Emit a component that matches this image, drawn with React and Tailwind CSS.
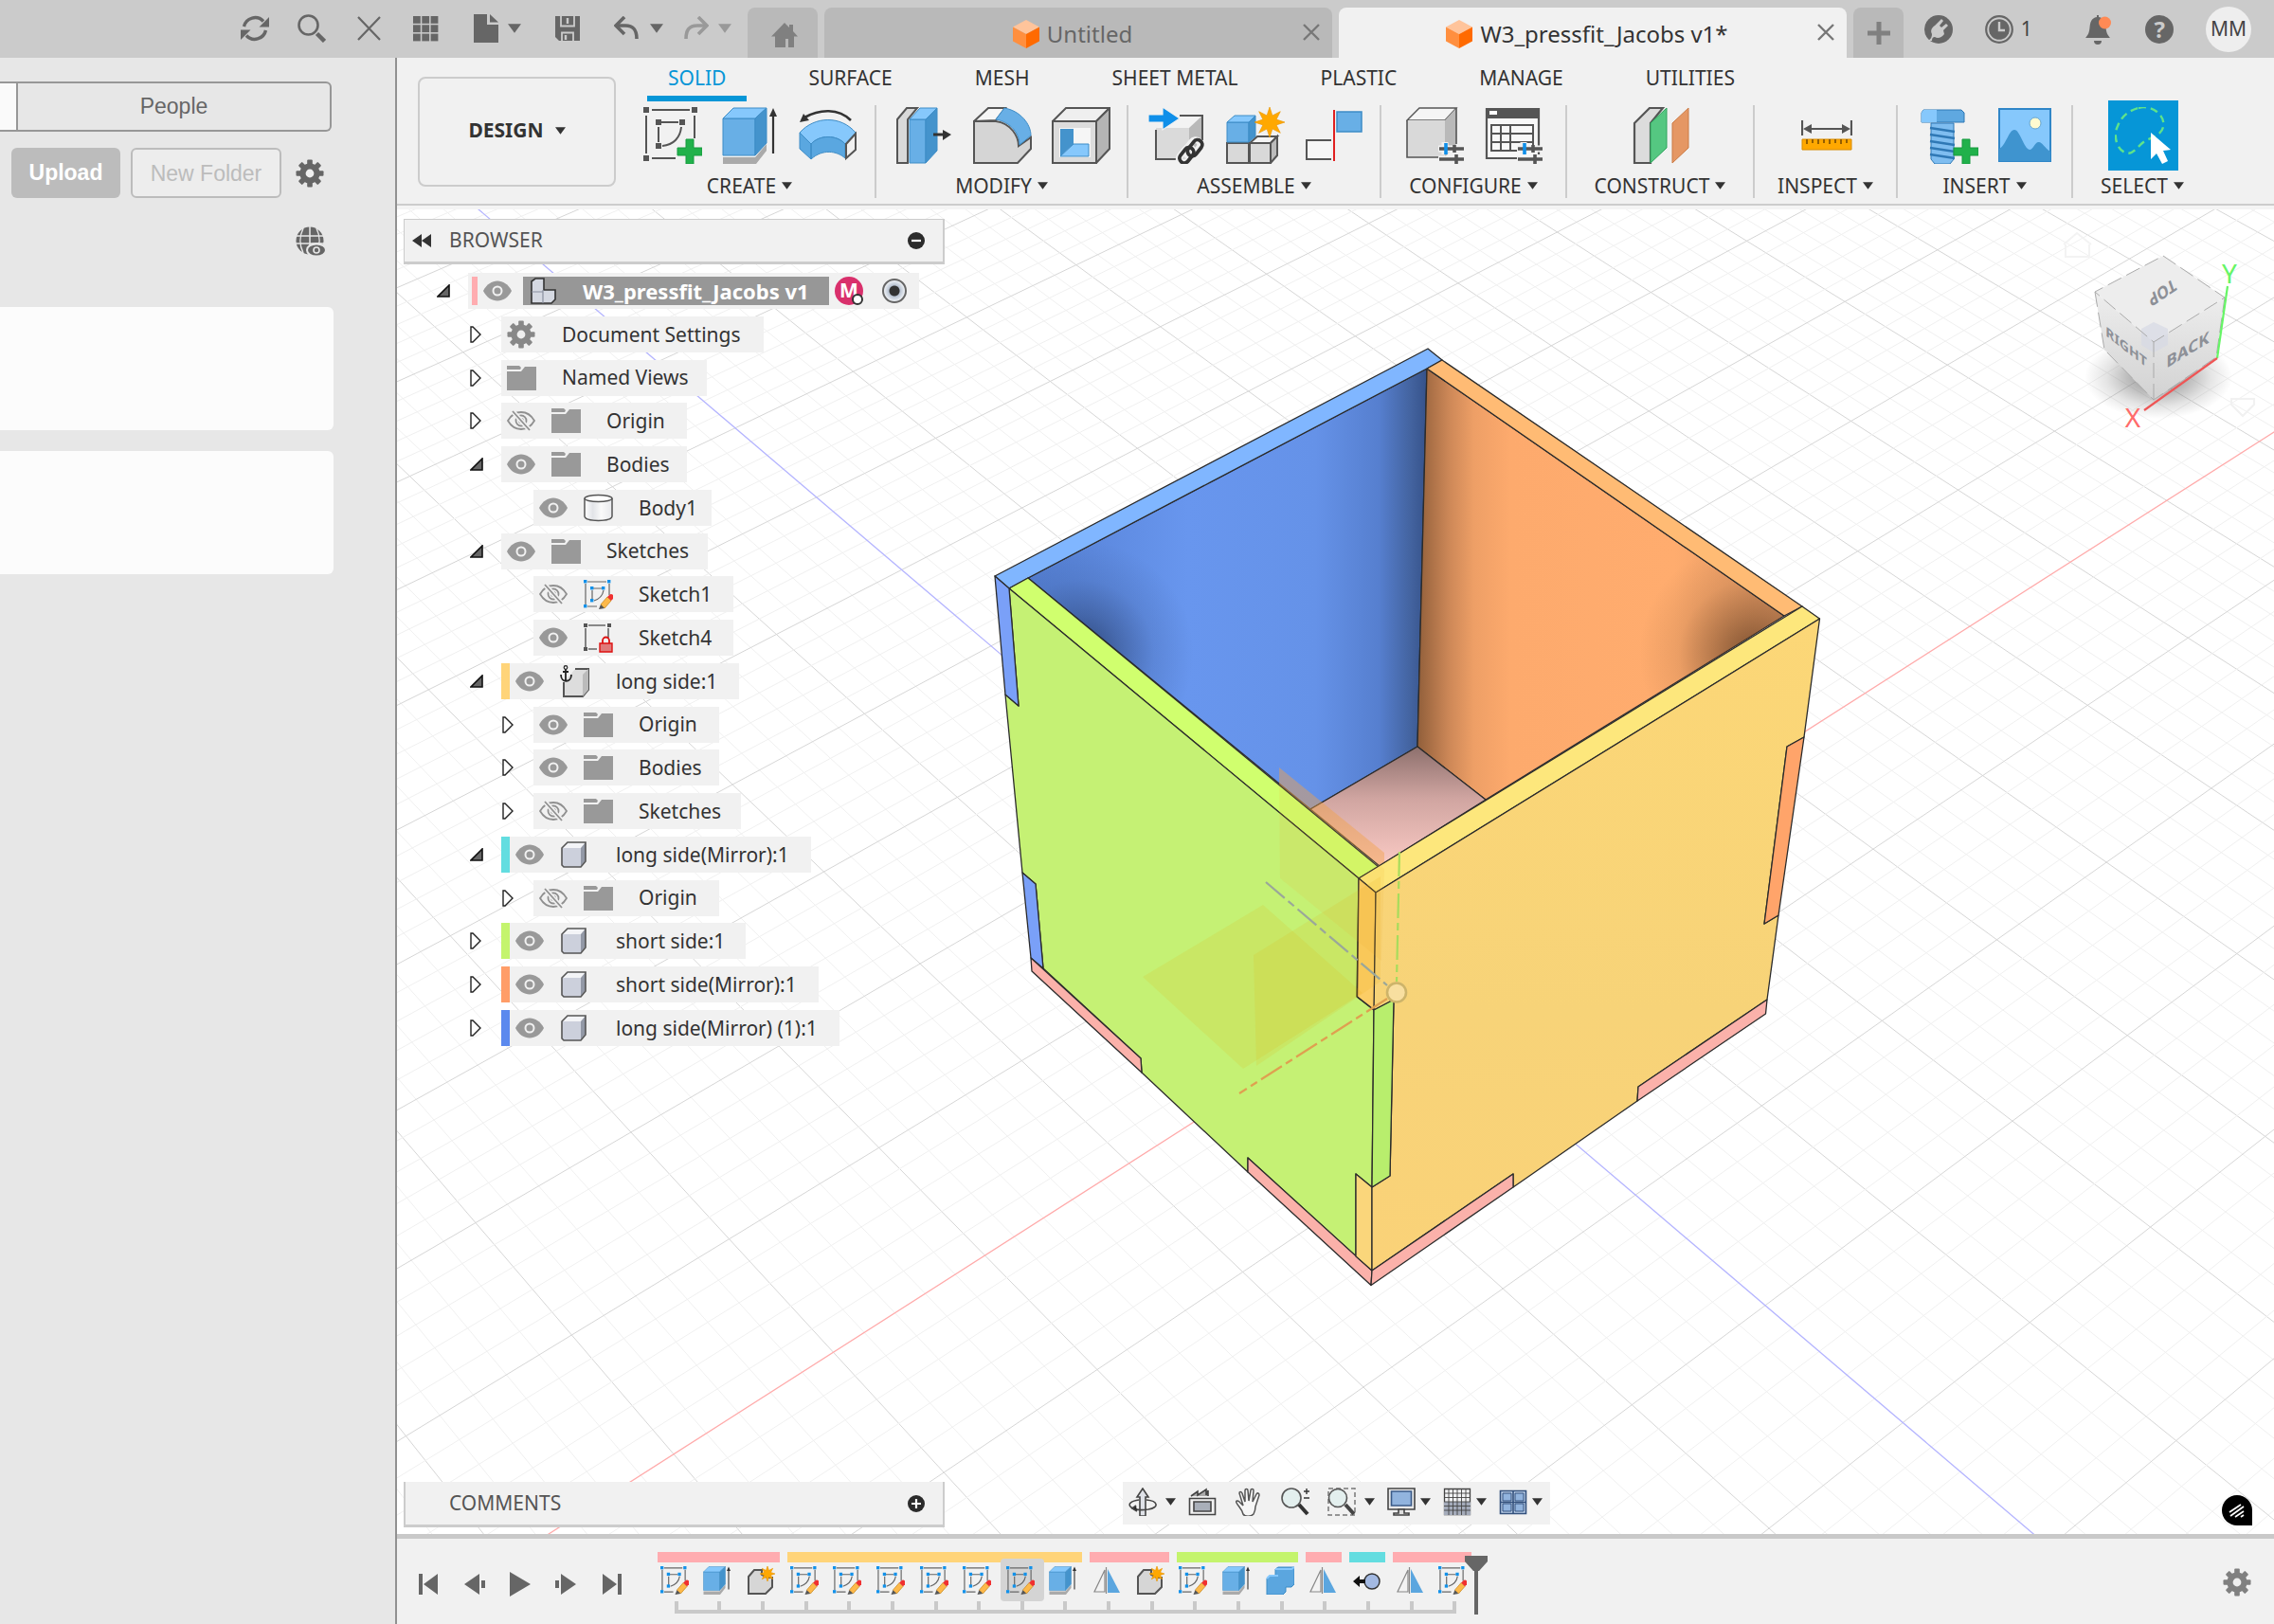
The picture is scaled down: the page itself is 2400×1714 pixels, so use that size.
import React from "react";
import clsx from "clsx";

/* ---------- small shared bits ---------- */

function Svg({ box = "0 0 60 60", className = "size-[60px]", children }) {
  return (
    <svg viewBox={box} className={clsx("shrink-0", className)} fill="none" aria-hidden="true">
      {children}
    </svg>
  );
}

function Caret({ className = "w-[11px] h-2" }) {
  return (
    <svg viewBox="0 0 12 8" className={clsx("shrink-0", className)} aria-hidden="true">
      <path d="M0 0h12L6 8z" fill="currentColor" />
    </svg>
  );
}

function Gear({ className = "size-[30px]" }) {
  return (
    <Svg box="0 0 30 30" className={className}>
      {[0, 45, 90, 135].map((a) => (
        <rect key={a} x="12.2" y="0.5" width="5.6" height="29" rx="1" fill="currentColor" transform={`rotate(${a} 15 15)`} />
      ))}
      <circle cx="15" cy="15" r="7.6" stroke="currentColor" strokeWidth="6" />
      <circle cx="15" cy="15" r="4.4" fill="#efefef" />
    </Svg>
  );
}

function OrangeCube() {
  return (
    <Svg box="0 0 28 30" className="w-7 h-[30px]">
      <path d="M14 0l14 7.5L14 15 0 7.5z" fill="#ffc49b" />
      <path d="M0 7.5L14 15v15L0 22.5z" fill="#ff8f3f" />
      <path d="M28 7.5L14 15v15l14-7.5z" fill="#ff6a00" />
    </Svg>
  );
}

/* ---------- application bar ---------- */

function IconButton({ label, className, children }) {
  return (
    <button type="button" aria-label={label} className={clsx("flex items-center shrink-0", className)}>
      {children}
    </button>
  );
}

function Tab({ label, active }) {
  return (
    <div
      className={clsx(
        "flex flex-1 items-center h-[53px] rounded-t-lg pl-5 pr-3 pt-0.5 min-w-0",
        active ? "bg-[#f1f1f1] text-[#333]" : "bg-[#b9b9b9] text-[#666]"
      )}
    >
      <button type="button" className="flex flex-1 items-center justify-center gap-2 text-2xl whitespace-nowrap">
        <OrangeCube />
        {label}
      </button>
      <IconButton label={`Close ${label}`} className="pb-1">
        <Svg box="0 0 20 20" className="size-5">
          <path d="M2 2l16 16M18 2L2 18" stroke="#777" strokeWidth="2.4" />
        </Svg>
      </IconButton>
    </div>
  );
}

function AppBar() {
  return (
    <header className="flex h-[61px] bg-[#cbcbcb] text-[#666]">
      <div className="flex items-center w-[789px] shrink-0 pl-[254px] pb-px">
        <div className="flex gap-[30px]">
          <IconButton label="Refresh">
            <Svg box="0 0 30 30" className="size-[30px]">
              <path d="M3.5 13A12 12 0 0 1 24 7.5M26.5 17A12 12 0 0 1 6 22.5" stroke="currentColor" strokeWidth="3.4" />
              <path d="M30 3v10.5H19.5zM0 27V16.5h10.5z" fill="currentColor" />
            </Svg>
          </IconButton>
          <IconButton label="Search">
            <Svg box="0 0 30 30" className="size-[30px]">
              <circle cx="11.5" cy="11.5" r="10" stroke="currentColor" strokeWidth="2.6" />
              <path d="M20.5 20.5l8 8" stroke="currentColor" strokeWidth="4.5" />
            </Svg>
          </IconButton>
          <IconButton label="Close panel">
            <Svg box="0 0 30 30" className="size-[30px]">
              <path d="M4 3l23 24M27 3L4 27" stroke="currentColor" strokeWidth="2.2" />
            </Svg>
          </IconButton>
          <IconButton label="Data panel">
            <Svg box="0 0 30 30" className="size-[30px]">
              {[0, 1, 2].map((r) =>
                [0, 1, 2].map((c) => (
                  <rect key={`${r}${c}`} x={2 + c * 9.3} y={2 + r * 9.3} width="7.8" height="7.8" fill="currentColor" />
                ))
              )}
            </Svg>
          </IconButton>
        </div>
        <div className="flex gap-[34px] ml-[34px]">
          <IconButton label="File" className="gap-2">
            <Svg box="0 0 30 32" className="w-[30px] h-8">
              <path d="M2 1h14v11h12v19H2z" fill="currentColor" />
              <path d="M19 1l9 8.5h-9z" fill="currentColor" />
            </Svg>
            <Caret className="w-3.5 h-2.5" />
          </IconButton>
          <IconButton label="Save">
            <Svg box="0 0 30 30" className="size-[30px]">
              <path d="M2 2h26v26H6l-4-4z" fill="currentColor" />
              <path d="M8 2v10.5h14V2M9 28v-8.5h12V28" stroke="#cbcbcb" strokeWidth="1.8" />
              <path d="M15 4v6M13 22v5" stroke="#cbcbcb" strokeWidth="2.4" />
            </Svg>
          </IconButton>
        </div>
        <div className="flex gap-5 ml-[34px]">
          <IconButton label="Undo" className="gap-2.5">
            <Svg box="0 0 28 26" className="w-7 h-[26px]">
              <path d="M2 10h10c9 0 12 5 12 14" stroke="currentColor" strokeWidth="3.6" />
              <path d="M11 1L2 10l9 9" stroke="currentColor" strokeWidth="3.6" />
            </Svg>
            <Caret className="w-3.5 h-2.5" />
          </IconButton>
          <IconButton label="Redo" className="gap-2.5 text-[#999]">
            <Svg box="0 0 28 26" className="w-7 h-[26px]">
              <path d="M26 10H16C7 10 4 15 4 24" stroke="currentColor" strokeWidth="3.6" />
              <path d="M17 1l9 9-9 9" stroke="currentColor" strokeWidth="3.6" />
            </Svg>
            <Caret className="w-3.5 h-2.5" />
          </IconButton>
        </div>
      </div>

      <div className="flex flex-1 items-end gap-[7px] min-w-0">
        <button type="button" aria-label="Home" className="flex items-center justify-center w-[74px] h-[53px] pl-1 pt-1 rounded-t-lg bg-[#b9b9b9] text-[#808080]">
          <Svg box="0 0 30 28" className="w-[30px] h-7">
            <path d="M15 1l5 5V3h4v7l5 5.5h-4V27h-6v-9h-3v9H5V15.500H1z" fill="currentColor" />
          </Svg>
        </button>
        <Tab label="Untitled" />
        <Tab label="W3_pressfit_Jacobs v1*" active />
        <button type="button" aria-label="New design" className="flex items-center justify-center w-[53px] h-[53px] rounded-t-lg bg-[#b9b9b9]">
          <Svg box="0 0 24 24" className="size-6">
            <path d="M12 0v24M0 12h24" stroke="#808080" strokeWidth="5" />
          </Svg>
        </button>
      </div>

      <div className="flex items-center w-[391px] shrink-0 pl-[22px] pr-6 justify-between">
        <IconButton label="Extensions">
          <Svg box="0 0 30 30" className="size-[30px]">
            <circle cx="15" cy="15" r="15" fill="currentColor" />
            <path d="M4 27c3-2 4-4 4-7-2-4 0-7 3-9l7-7 2 2-4 5 2 2 5-4 2 2-5 5 1 4c-3 4-7 5-10 3-2 0-3 1-3 4z" fill="#cbcbcb" />
          </Svg>
        </IconButton>
        <IconButton label="Jobs" className="gap-2 text-[21px]">
          <Svg box="0 0 30 30" className="size-[30px]">
            <circle cx="15" cy="15" r="13.8" stroke="currentColor" strokeWidth="2.2" />
            <circle cx="15" cy="15" r="10.8" fill="currentColor" />
            <path d="M15 7v9h6" stroke="#cbcbcb" strokeWidth="2.4" />
          </Svg>
          <span className="text-[#444]">1</span>
        </IconButton>
        <IconButton label="Notifications" className="ml-[22px]">
          <Svg box="0 0 30 32" className="w-[30px] h-8">
            <path d="M13 1h2v2c6 1 7 6 7.5 11 .5 6 2 8 4.5 11H1c2.500-3 4-5 4.5-11C6 9 7 4 13 3zM10 28h8a4 4 0 0 1-8 0z" fill="currentColor" />
            <circle cx="21.500" cy="9" r="6.5" fill="#ff8a55" />
          </Svg>
        </IconButton>
        <button type="button" aria-label="Help" className="flex items-center justify-center size-[30px] rounded-full bg-[#666] text-[#cbcbcb] text-2xl font-bold">
          ?
        </button>
        <button type="button" className="flex items-center justify-center size-12 rounded-full bg-[#eee] text-[#444] text-[21px]">MM</button>
      </div>
    </header>
  );
}

/* ---------- data panel ---------- */

function DataPanel() {
  return (
    <aside className="flex flex-col w-[419px] shrink-0 bg-[#e7e7e7] border-r-2 border-[#919191] font-['Liberation_Sans',Arial,sans-serif] text-[23px] text-[#666]">
      <div className="flex mt-[25px] mr-[67px] h-[53px] border-2 border-l-0 border-[#979797] rounded-r-md overflow-hidden">
        <span className="w-[19px] bg-[#fafafa] border-r-2 border-[#979797]" />
        <button type="button" className="flex-1">People</button>
      </div>
      <div className="flex items-center mt-[17px] pl-3">
        <button type="button" className="w-[115px] h-[53px] rounded-md bg-[#bcbcbc] text-white font-bold">Upload</button>
        <button type="button" className="w-[159px] h-[53px] ml-[11px] pt-0.5 rounded-md border-2 border-[#bcbcbc] bg-[#ededed] text-[#bcbcbc]">New Folder</button>
        <IconButton label="Panel settings" className="ml-[15px]">
          <Gear />
        </IconButton>
      </div>
      <IconButton label="Open on the web" className="ml-[312px] mt-[30px] w-8">
        <Svg box="0 0 32 32" className="size-8">
          <circle cx="15" cy="15" r="14.5" fill="#666" />
          <path d="M15 0v30M1 10h28M0 18h30M8 2c-4 8-4 18 0 26M22 2c4 8 4 18 0 26" stroke="#e7e7e7" strokeWidth="1.5" />
          <ellipse cx="22" cy="25" rx="11" ry="8" fill="#e7e7e7" />
          <ellipse cx="22" cy="25" rx="9" ry="5.5" fill="#666" />
          <circle cx="22" cy="25" r="3" fill="#666" stroke="#e7e7e7" strokeWidth="1.6" />
        </Svg>
      </IconButton>
      <div className="mt-[53px] mr-[65px] h-[130px] rounded-r-md bg-[#fcfcfc]" />
      <div className="mt-[22px] mr-[65px] h-[130px] rounded-r-md bg-[#fcfcfc]" />
    </aside>
  );
}

/* ---------- ribbon icons ---------- */

const dark = "#555";

function PlusMark() {
  return <path d="M45 34h8v9h9v8h-9v9h-8v-9h-9v-8h9z" fill="#21b14b" stroke="#179a3e" />;
}

function SketchIcon() {
  return (
    <Svg box="0 0 62 60" className="w-[62px] h-[60px]">
      <path d="M9 3h40M3 9v40M54 9v24M9 54h25M19 16h18M16 21v16M40 21c-1 11-8 19-20 20" stroke={dark} strokeWidth="2" />
      {[[0, 0], [51, 0], [0, 51], [13, 13], [38, 13], [13, 38]].map(([x, y]) => (
        <rect key={`${x}-${y}`} x={x} y={y} width="6" height="6" fill={dark} />
      ))}
      <PlusMark />
    </Svg>
  );
}

function ExtrudeIcon({ className = "size-[60px]" }) {
  return (
    <Svg className={className}>
      <path d="M1 53h34l12-14v7L36 60H1z" fill="#aaa" />
      <path d="M1 12h34v39H1z" fill="#68afe6" stroke="#3d8cc6" />
      <path d="M1 12L12 1h35L35 12z" fill="#86c8fc" stroke="#3d8cc6" />
      <path d="M35 12L47 1v37L35 51z" fill="#4493cc" stroke="#3d8cc6" />
      <path d="M54 49V8" stroke="#333" strokeWidth="2.2" />
      <path d="M54 1l4 9h-8z" fill="#333" />
    </Svg>
  );
}

function RevolveIcon() {
  return (
    <Svg box="0 0 62 60" className="w-[62px] h-[60px]">
      <path d="M55 14C42 1 22 2 6 11" stroke="#333" strokeWidth="2.6" />
      <path d="M1 16l4-9 6 7z" fill="#333" />
      <path d="M1 27c16-18 44-18 59 0l-11 12c-9-10-27-10-36 0z" fill="#86c8fc" stroke="#3d8cc6" />
      <path d="M1 27l12 12v16L1 44zM13 39c9-10 27-10 36 0v15c-9-8-24-10-36 1z" fill="#5aa7e0" stroke="#3d8cc6" />
      <path d="M50 39l10-11v17l-10 9z" fill="#f1f1f1" stroke={dark} strokeWidth="2" />
    </Svg>
  );
}

function PressPullIcon() {
  return (
    <Svg box="0 0 62 60" className="w-[62px] h-[60px]">
      <path d="M3 13L13 1h11L14 13v46H3z" fill="#d9d9d9" stroke={dark} strokeWidth="2" />
      <path d="M16 13h17v46H16z" fill="#68afe6" stroke="#3d8cc6" />
      <path d="M16 13L27 1h18L33 13z" fill="#86c8fc" stroke="#3d8cc6" />
      <path d="M33 13L45 1v45L33 59z" fill="#4493cc" stroke="#3d8cc6" />
      <path d="M41 29h12" stroke="#333" strokeWidth="3" />
      <path d="M51 24l9 5-9 6z" fill="#333" />
    </Svg>
  );
}

function FilletIcon() {
  return (
    <Svg box="0 0 62 60" className="w-[62px] h-[60px]">
      <path d="M1 15L16 1h18L24 14z" fill="#f6f6f6" stroke={dark} strokeWidth="2" />
      <path d="M1 15h23c16 2 24 16 24 26l13-9v12L47 59H1z" fill="#d5d5d5" stroke={dark} strokeWidth="2" />
      <path d="M33 1c17 3 28 17 28 29L49 40C49 28 40 16 24 13z" fill="#68afe6" stroke="#3d8cc6" />
    </Svg>
  );
}

function ShellIcon() {
  return (
    <Svg box="0 0 62 60" className="w-[62px] h-[60px]">
      <path d="M1 15L15 1h46L47 15z" fill="#efefef" stroke={dark} strokeWidth="2" />
      <path d="M47 15L61 1v43L47 59z" fill="#b5b5b5" stroke={dark} strokeWidth="2" />
      <path d="M1 15h46v44H1z" fill="#dcdcdc" stroke={dark} strokeWidth="2" />
      <path d="M8 22h33v31H8z" fill="#f6f6f6" />
      <path d="M9 23h14v16L9 52z" fill="#4493cc" />
      <path d="M9 52l14-13h16v13z" fill="#86c8fc" stroke="#3d8cc6" />
    </Svg>
  );
}

function InsertLinkIcon() {
  return (
    <Svg box="0 0 62 60" className="w-[62px] h-[60px]">
      <path d="M9 22L24 9h34L44 22z" fill="#f3f3f3" />
      <path d="M44 22L58 9v30L44 54z" fill="#b9b9b9" />
      <path d="M9 22v33h35V22z" fill="#dadada" />
      <path d="M9 24v31h24M34 9h24v26" stroke={dark} strokeWidth="2" />
      <path d="M1 8h15V0l18 12-18 12v-8H1z" fill="#0f8fe9" stroke="#f1f1f1" strokeWidth="1.2" />
      <g stroke="#f1f1f1" strokeWidth="7">
        <rect x="44" y="34" width="10" height="19" rx="5" transform="rotate(38 49 42)" />
        <rect x="37" y="42" width="10" height="19" rx="5" transform="rotate(38 42 50)" />
      </g>
      <g stroke="#333" strokeWidth="3.8">
        <rect x="46" y="34" width="10" height="19" rx="5" transform="rotate(38 51 42)" />
        <rect x="37" y="42" width="10" height="18" rx="5" transform="rotate(38 42 50)" />
      </g>
    </Svg>
  );
}

function Spark({ cx, cy, r }) {
  const pts = Array.from({ length: 16 }, (_, i) => {
    const a = (i * Math.PI) / 8;
    const k = i % 2 ? r * 0.48 : r;
    return `${(cx + k * Math.sin(a)).toFixed(1)},${(cy - k * Math.cos(a)).toFixed(1)}`;
  }).join(" ");
  return <polygon points={pts} fill="#ffa800" stroke="#e89400" strokeWidth="0.6" />;
}

function NewComponentIcon() {
  return (
    <Svg box="0 0 62 60" className="w-[62px] h-[60px]">
      <path d="M1 38h23v21H1zM25 38h22v21H25z" fill="#d9d9d9" stroke={dark} strokeWidth="2" />
      <path d="M25 38l8-7h21l-7 7z" fill="#f4f4f4" stroke={dark} strokeWidth="2" />
      <path d="M47 38l7-7v20l-7 8z" fill="#bbb" stroke={dark} strokeWidth="2" />
      <path d="M1 16h23v21H1z" fill="#68afe6" stroke="#3d8cc6" />
      <path d="M1 16l8-7h22l-7 7z" fill="#86c8fc" stroke="#3d8cc6" />
      <path d="M24 16l7-7v22l-7 6z" fill="#4493cc" stroke="#3d8cc6" />
      <Spark cx={46} cy={16} r={16} />
    </Svg>
  );
}

function JointIcon() {
  return (
    <Svg box="0 0 62 60" className="w-[62px] h-[60px]">
      <path d="M28 35H2v20h26" fill="#f6f6f6" stroke={dark} strokeWidth="2" />
      <path d="M34 5h26v21H34z" fill="#68afe6" stroke="#3d8cc6" strokeWidth="1.5" />
      <path d="M31 3v54" stroke="#e02020" strokeWidth="2" />
    </Svg>
  );
}

function Sliders() {
  return (
    <g>
      <path d="M34 44h28M34 55h28M41 37v13M55 50v10" stroke="#f1f1f1" strokeWidth="7" />
      <path d="M35 44h26M35 55h26M53 50v10M51 40v8" stroke={dark} strokeWidth="3.6" />
      <path d="M42 38v12" stroke="#0f8fe9" strokeWidth="3.6" />
    </g>
  );
}

function ConfigureIcon() {
  return (
    <Svg box="0 0 62 60" className="w-[62px] h-[60px]">
      <path d="M1 14L14 1h39L41 14z" fill="#f5f5f5" stroke={dark} strokeWidth="1.4" />
      <path d="M41 14L53 1v38L41 53z" fill="#b9b9b9" />
      <path d="M1 14h40v39H1z" fill="#d9d9d9" />
      <path d="M41 53H1V14M53 1v38" stroke={dark} strokeWidth="1.6" />
      <Sliders />
    </Svg>
  );
}

function TableIcon() {
  return (
    <Svg box="0 0 62 60" className="w-[62px] h-[60px]">
      <path d="M2 2h55v52H2z" fill="#f8f8f8" stroke={dark} strokeWidth="2.2" />
      <path d="M1 1h57v11H1z" fill={dark} />
      <path d="M5 4h8v4H5z" fill="#fff" />
      <path d="M7 19h44v27H7zM7 28h44M7 37h44M17 19v27M27 19v27" stroke={dark} strokeWidth="2" />
      <Sliders />
    </Svg>
  );
}

function ConstructIcon() {
  return (
    <Svg>
      <path d="M2 17L18 1h14L19 17v42H2z" fill="#dcdcdc" stroke={dark} strokeWidth="2.2" />
      <path d="M19 17L36 1v42L19 59z" fill="#55c781" stroke="#2ea45c" />
      <path d="M42 17L59 1v42L42 59z" fill="#e59764" stroke="#cb7a44" />
    </Svg>
  );
}

function MeasureIcon() {
  return (
    <Svg box="0 0 54 60" className="w-[54px] h-[60px]">
      <path d="M1 14v16M53 14v16M6 23h42" stroke={dark} strokeWidth="2.2" />
      <path d="M2 23l9-5v10zM52 23l-9-5v10z" fill={dark} />
      <path d="M1 34h52v11H1z" fill="#ffa800" stroke="#d98c00" />
      <path d="M6 34v5M12 34v4M18 34v5M24 34v4M30 34v5M36 34v4M42 34v5M48 34v4" stroke="#7a4c00" strokeWidth="1.6" />
    </Svg>
  );
}

function FastenerIcon() {
  return (
    <Svg box="0 0 62 60" className="w-[62px] h-[60px]">
      <path d="M4 3h40l3 3v10H2V6z" fill="#5fa8e0" stroke="#2f78b5" />
      <path d="M4 3h14v13H2V6z" fill="#86c8fc" />
      <path d="M12 17h24v38l-4 5H16l-4-5z" fill="#7fbdf0" stroke="#2f78b5" />
      <path d="M11 22l26 4M11 29l26 4M11 36l26 4M11 43l26 4M11 50l26 4" stroke="#2f78b5" strokeWidth="2.4" />
      <PlusMark />
    </Svg>
  );
}

function ImageIcon() {
  return (
    <Svg box="0 0 56 60" className="w-14 h-[60px]">
      <path d="M1 2h54v55H1z" fill="#86c8fc" stroke="#2f86c8" strokeWidth="2" />
      <circle cx="39" cy="17" r="6" fill="#fffbd0" stroke="#6aa7cf" />
      <path d="M1 44c7-3 10-20 16-20s10 20 16 21c4 0 6-9 10-8 3 0 6 6 12 10v10H1z" fill="#3f94cf" />
    </Svg>
  );
}

function SelectIcon() {
  return (
    <span className="flex items-center justify-center size-[74px] -my-[7px] bg-[#0696d7]">
      <Svg>
        <path
          d="M25 1C38-3 54 8 51 21 49 31 36 32 29 38 22 44 18 51 11 48 2 45-2 30 3 20 7 10 14 4 25 1z"
          stroke="#5fe38a"
          strokeWidth="2.4"
          strokeDasharray="8 5"
        />
        <path d="M38 27v28l6-6 6 11 6-3-5-11 8-1z" fill="#fff" />
      </Svg>
    </span>
  );
}

const groups = [
  { label: "CREATE", width: "w-[266px]", icons: [SketchIcon, ExtrudeIcon, RevolveIcon] },
  { label: "MODIFY", width: "w-[266px]", icons: [PressPullIcon, FilletIcon, ShellIcon] },
  { label: "ASSEMBLE", width: "w-[267px]", icons: [InsertLinkIcon, NewComponentIcon, JointIcon] },
  { label: "CONFIGURE", width: "w-[196px]", icons: [ConfigureIcon, TableIcon] },
  { label: "CONSTRUCT", width: "w-[198px]", icons: [ConstructIcon] },
  { label: "INSPECT", width: "w-[151px]", icons: [MeasureIcon] },
  { label: "INSERT", width: "w-[185px]", icons: [FastenerIcon, ImageIcon] },
  { label: "SELECT", width: "w-[146px]", icons: [SelectIcon] },
];

const workspaces = ["SOLID", "SURFACE", "MESH", "SHEET METAL", "PLASTIC", "MANAGE", "UTILITIES"];

function Ribbon() {
  return (
    <div className="flex h-[156px] bg-[#f1f1f1] border-b-2 border-[#ccc] text-[#333] text-[21px]">
      <button
        type="button"
        className="flex items-center justify-center gap-3 w-[209px] h-[116px] mt-5 ml-[22px] pb-0.5 shrink-0 rounded-lg border-2 border-[#ccc] font-bold"
      >
        DESIGN <Caret />
      </button>
      <div className="flex flex-col flex-1 min-w-0">
        <nav className="flex gap-[43px] pl-[33px] h-[46px]">
          {workspaces.map((w, i) => (
            <a
              key={w}
              href={`#${w.toLowerCase().replace(" ", "-")}`}
              className={clsx(
                "px-[22px] pt-[5px] leading-[33px] border-b-[6px] whitespace-nowrap",
                i === 0 ? "text-[#0696d7] border-[#0696d7]" : "border-transparent"
              )}
            >
              {w}
            </a>
          ))}
        </nav>
        <div className="flex pl-[9px] pt-1">
          {groups.map(({ label, width, icons }, i) => (
            <div
              key={label}
              className={clsx(
                "flex flex-col items-center h-[98px] shrink-0 border-[#ccc]",
                width,
                i < groups.length - 1 && "border-r-2"
              )}
            >
              <div className="flex gap-[21px] h-[60px] mt-0.5 pl-0.5">
                {icons.map((Icon, k) => (
                  <button key={k} type="button" aria-label={`${label} ${k + 1}`}>
                    <Icon />
                  </button>
                ))}
              </div>
              <button type="button" className="flex items-center gap-1.5 mt-[9px] leading-7">
                {label} <Caret />
              </button>
            </div>
          ))}
        </div>
      </div>
    </div>
  );
}

/* ---------- viewport drawing ---------- */

// Perspective map of the ground plane, one unit = one major grid cell.
function project(u, w) {
  const d = 1 + 0.0233 * u - 0.02723 * w;
  return [(1474.7 + 169.3 * u + 78.7 * w) / d, (1047 - 61.79 * u + 72.74 * w) / d];
}

function GridLine({ from, to, stroke, width = 1 }) {
  const [x1, y1] = project(...from);
  const [x2, y2] = project(...to);
  return <line x1={x1} y1={y1} x2={x2} y2={y2} stroke={stroke} strokeWidth={width} />;
}

function Grid() {
  const lines = [];
  for (let i = -40; i <= 65; i++) {
    if (i === 0) continue;
    lines.push(<GridLine key={`u${i}`} from={[i / 5, -11]} to={[i / 5, 8]} stroke={i % 5 ? "#f0f0f0" : "#d6d6d6"} />);
  }
  for (let i = -55; i <= 40; i++) {
    if (i === 0) continue;
    lines.push(<GridLine key={`w${i}`} from={[-8, i / 5]} to={[13, i / 5]} stroke={i % 5 ? "#f0f0f0" : "#d6d6d6"} />);
  }
  return (
    <g>
      {lines}
      <GridLine from={[0, -11]} to={[0, 8]} stroke="#b4b4ff" width={1.3} />
      <GridLine from={[-8, 0]} to={[13, 0]} stroke="#ffaaaa" width={1.3} />
    </g>
  );
}

function Box() {
  return (
    <g stroke="#2b2b2b" strokeWidth="1.3" strokeLinejoin="round">
      {/* inside walls and floor */}
      <path d="M1085 610L1506 389 1496 788 1383 854z" fill="url(#blueWall)" />
      <path d="M1085 610L1506 389 1496 788 1383 854z" fill="url(#blueCorner)" stroke="none" />
      <path d="M1506 389L1883 650 1568 844 1496 788z" fill="url(#orangeWall)" />
      <path d="M1506 389L1883 650 1568 844 1496 788z" fill="url(#orangeCorner)" stroke="none" />
      <path d="M1496 788L1568 844 1456 914 1383 854z" fill="url(#floor)" />
      <path d="M1350 810L1461 900V917L1350 830z" fill="#f2a14a" fillOpacity="0.45" stroke="none" />
      {/* rims */}
      <path d="M1050 608L1507 368l15 12L1506 389 1085 610 1065 621z" fill="#80b6ff" />
      <path d="M1522 380L1902 640l-19 10L1506 389z" fill="#ffbb74" />
      <path d="M1065 621l20-11 370 305-21 12z" fill="#d0ff6e" />
      <path d="M1434 927L1902 640l18.500 13L1452 942z" fill="#fde77c" />
      {/* left face */}
      <path d="M1065 621L1434 927 1432 1052 1450 1066 1448 1253 1431 1239V1326L1317 1222V1237L1205 1132 1204 1117 1101 1022 1093 933 1079 921 1061 733 1075 745z" fill="#c5f174" />
      <path d="M1050 608l15 13 10 124-14-12z" fill="#7aa0f8" />
      <path d="M1079 921l14 12 8 89-13-11z" fill="#7aa0f8" />
      <path d="M1088 1011L1204 1117l1 15L1089 1025z" fill="#fbb1aa" />
      <path d="M1317 1222L1448 1341l-1 15.500L1317 1237z" fill="#fbb1aa" />
      <path d="M1431 1239l17 14v88l-17-15z" fill="#fad67b" />
      <path d="M1434 927l18 15-1.500 124-18-14z" fill="#fccd66" />
      {/* right face */}
      <path d="M1452 942L1920.500 653 1904 778 1886 788 1862 975 1877 966 1865 1055 1729 1147 1728 1162 1597 1253V1239L1448 1341 1448 1253 1467 1241 1471 1055 1450 1066z" fill="url(#yellowFace)" />
      <path d="M1904 778l-18 10-24 187 15-9z" fill="#ffa46a" />
      <path d="M1471 1055l-4 186-19 12 2-187z" fill="#b8ee6d" />
      <path d="M1448 1341L1597 1239v14L1447 1356.500z" fill="#fbb1aa" />
      <path d="M1865 1055l-1.500 15L1728 1162l1-15z" fill="#fbb1aa" />
      {/* origin planes and axes */}
      <g stroke="none">
        <path d="M1350 826L1461 917 1458 1014 1351 927z" fill="#f0b030" fillOpacity="0.12" />
        <path d="M1333 955L1206 1031 1312 1128 1438 1048z" fill="#e8a800" fillOpacity="0.13" />
        <path d="M1457 925L1323 1008 1326 1125 1457 1036z" fill="#e8a800" fillOpacity="0.12" />
      </g>
      <g strokeWidth="2.2" strokeDasharray="26 5 8 5">
        <path d="M1336 931L1464 1040" stroke="#9aa79a" />
        <path d="M1464 1054L1308 1154" stroke="#dfa050" />
        <path d="M1477 899L1474 1036" stroke="#a8dc5c" />
      </g>
      <circle cx="1474" cy="1047.500" r="10" fill="#f8dfa0" stroke="#cdb46a" strokeWidth="2.6" />
    </g>
  );
}

function ViewCube() {
  return (
    <g>
      <path d="M2178 258l14-12 15 12M2180 258v13h25v-13" stroke="#f3f3f3" strokeWidth="2" fill="none" />
      <path d="M2355 421h24v6l-12 12-12-12z" stroke="#f1f1f1" strokeWidth="2" fill="none" />
      <ellipse cx="2278" cy="398" rx="78" ry="44" fill="url(#cubeShadow)" />
      <path d="M2283 270L2348 314 2273 361 2211 308z" fill="#ededed" />
      <path d="M2211 308L2273 361 2273 422 2221 369z" fill="url(#cubeSide)" />
      <path d="M2273 361L2348 314 2339 377 2273 422z" fill="url(#cubeSide)" />
      <path d="M2273 340l15 7v17l-15 8-13-8v-17z" fill="#d5d9e4" fillOpacity="0.7" />
      <path
        d="M2283 270L2348 314 2273 361 2211 308zM2211 308L2221 369 2273 422 2339 377 2348 314M2273 361V422"
        stroke="#aaa"
        strokeWidth="1"
        strokeDasharray="16 6"
        fill="none"
      />
      <g fill="#8d9097" fontWeight="700" fontSize="17" textAnchor="middle">
        <text transform="translate(2280 303) rotate(146) skewX(-14)">TOP</text>
        <text transform="translate(2244 371) skewY(38)" fontSize="14">RIGHT</text>
        <text transform="translate(2309 375) skewY(-31)">BACK</text>
      </g>
      <path d="M2351 302L2340 378" stroke="#66f566" strokeWidth="2.2" />
      <path d="M2340 378L2263 433" stroke="#ee5555" strokeWidth="2.2" />
      <g fontSize="28" textAnchor="middle">
        <text x="2353" y="299" fill="#66f566">Y</text>
        <text x="2251" y="451" fill="#ff6b6b">X</text>
      </g>
    </g>
  );
}

function Scene() {
  return (
    <svg viewBox="419 221 1981 1398" preserveAspectRatio="xMidYMid slice" className="absolute inset-0 size-full" role="img" aria-label="Press-fit box model">
      <defs>
        <linearGradient id="blueWall" gradientUnits="userSpaceOnUse" x1="1085" x2="1506" y1="0" y2="0">
          <stop offset="0" stopColor="#5580d4" />
          <stop offset="0.4" stopColor="#6896ee" />
          <stop offset="0.72" stopColor="#6592e8" />
          <stop offset="0.88" stopColor="#567fcf" />
          <stop offset="0.96" stopColor="#43639f" />
          <stop offset="1" stopColor="#36528a" />
        </linearGradient>
        <radialGradient id="blueCorner" gradientUnits="userSpaceOnUse" cx="1140" cy="690" r="120">
          <stop offset="0" stopColor="#22365f" stopOpacity="0.8" />
          <stop offset="0.35" stopColor="#22365f" stopOpacity="0.4" />
          <stop offset="0.65" stopColor="#22365f" stopOpacity="0.12" />
          <stop offset="1" stopColor="#22365f" stopOpacity="0" />
        </radialGradient>
        <linearGradient id="orangeWall" gradientUnits="userSpaceOnUse" x1="1498" x2="1883" y1="0" y2="0">
          <stop offset="0" stopColor="#94613c" />
          <stop offset="0.08" stopColor="#cc8757" />
          <stop offset="0.15" stopColor="#ee9f66" />
          <stop offset="0.25" stopColor="#fdaa6d" />
          <stop offset="0.7" stopColor="#ffac6e" />
          <stop offset="1" stopColor="#e09763" />
        </linearGradient>
        <radialGradient id="orangeCorner" gradientUnits="userSpaceOnUse" cx="1850" cy="690" r="120">
          <stop offset="0" stopColor="#5d3a20" stopOpacity="0.75" />
          <stop offset="0.35" stopColor="#5d3a20" stopOpacity="0.4" />
          <stop offset="0.65" stopColor="#5d3a20" stopOpacity="0.12" />
          <stop offset="1" stopColor="#5d3a20" stopOpacity="0" />
        </radialGradient>
        <linearGradient id="floor" gradientUnits="userSpaceOnUse" x1="0" x2="0" y1="788" y2="910">
          <stop offset="0" stopColor="#8d706d" />
          <stop offset="0.45" stopColor="#d0a5a1" />
          <stop offset="1" stopColor="#f8c8c2" />
        </linearGradient>
        <linearGradient id="yellowFace" x1="0" x2="0" y1="0" y2="1">
          <stop offset="0" stopColor="#fcd777" />
          <stop offset="0.6" stopColor="#f7d378" />
          <stop offset="1" stopColor="#fad278" />
        </linearGradient>
        <linearGradient id="cubeSide" x1="0" x2="0" y1="0" y2="1">
          <stop offset="0" stopColor="#ededed" />
          <stop offset="1" stopColor="#d2d2d2" />
        </linearGradient>
        <radialGradient id="cubeShadow">
          <stop offset="0.3" stopColor="#777" stopOpacity="0.6" />
          <stop offset="0.7" stopColor="#777" stopOpacity="0.2" />
          <stop offset="1" stopColor="#777" stopOpacity="0" />
        </radialGradient>
      </defs>
      <Grid />
      <Box />
      <ViewCube />
    </svg>
  );
}

/* ---------- browser tree ---------- */

function Eye({ off }) {
  return (
    <Svg box="0 0 30 22" className="w-[30px] h-[22px]">
      {off ? (
        <g stroke="#909090" strokeWidth="1.8">
          <path d="M1 11C8-1 22-1 29 11 22 23 8 23 1 11z" />
          <circle cx="15" cy="11" r="5.5" />
          <circle cx="15" cy="11" r="2" />
          <path d="M6 1l18 20" stroke="#f1f1f1" strokeWidth="5" />
          <path d="M6 1l18 20" />
        </g>
      ) : (
        <g>
          <path d="M0 11C7-3 23-3 30 11 23 25 7 25 0 11z" fill="#999" />
          <circle cx="15" cy="11" r="4.5" stroke="#f1f1f1" strokeWidth="2" />
        </g>
      )}
    </Svg>
  );
}

function Folder() {
  return (
    <Svg box="0 0 31 26" className="w-[31px] h-[26px]">
      <path d="M0 0h13l2 2-1 2H0zM0 6h15l4-5h12v25H0z" fill="#999" />
    </Svg>
  );
}

function Body() {
  return (
    <Svg box="0 0 31 30" className="w-[31px] h-[30px]">
      <path d="M1 5v19c1 6 28 6 29 0V5" fill="url(#bodySide)" stroke="#555" strokeWidth="1.5" />
      <ellipse cx="15.500" cy="5" rx="14.5" ry="3.6" fill="#fff" stroke="#555" strokeWidth="1.5" />
      <defs>
        <linearGradient id="bodySide">
          <stop offset="0" stopColor="#fff" />
          <stop offset="0.3" stopColor="#e2e4e8" />
          <stop offset="0.6" stopColor="#fafafa" />
          <stop offset="1" stopColor="#e8e9ec" />
        </linearGradient>
      </defs>
    </Svg>
  );
}

function Component() {
  return (
    <Svg box="0 0 31 30" className="w-[31px] h-[30px]">
      <path d="M2 8l5-6h19l-4 6z" fill="#f3f4f7" />
      <path d="M22 8l5-6v19l-5 6z" fill="#9298a6" />
      <path d="M2 8h20v20H4l-2-2z" fill="#ccd0dc" />
      <path d="M2 8l6-6h19v20l-5 6H4l-2-2z" stroke="#555" strokeWidth="1.6" />
    </Svg>
  );
}

function GroundedComponent() {
  return (
    <Svg box="0 0 31 34" className="w-[31px] h-[34px]">
      <path d="M4 18V33h20l6-7V4H16" fill="#ddd" stroke="#555" strokeWidth="2" />
      <path d="M24 10l6-6v22l-6 7z" fill="#bbb" />
      <path d="M6 4v12M1 10c0 9 11 9 11 0M3 7h6" stroke="#222" strokeWidth="1.8" />
      <circle cx="6" cy="2.5" r="1.8" stroke="#222" strokeWidth="1.2" />
    </Svg>
  );
}

function SketchPencil({ className = "size-[31px]" }) {
  return (
    <Svg box="0 0 31 31" className={className}>
      <path d="M4 2h20M2 4v22M27 4v12M4 28h10M10 9h9M9 11v10M21 11c-1 6-4 9-10 11" stroke="#666" strokeWidth="1.2" />
      {[[0, 0], [25, 0], [0, 26], [7, 7], [19, 7], [7, 20]].map(([x, y]) => (
        <rect key={`${x}-${y}`} x={x} y={y} width="3.4" height="3.4" fill="#1191ea" />
      ))}
      <path d="M18 26l7-8 4 4-7 8z" fill="#fdb94a" stroke="#c98a20" strokeWidth="0.8" />
      <path d="M25 18l2-2a2.600 2.600 0 0 1 4 4l-2 2z" fill="#f03030" />
      <path d="M18 26l4 4-6 1z" fill="#555" />
    </Svg>
  );
}

function SketchLocked() {
  return (
    <Svg box="0 0 31 31" className="size-[31px]">
      <path d="M5 2h18M2 5v20M26 5v10M5 27h9" stroke="#666" strokeWidth="1.6" />
      {[[0, 0], [25, 0], [0, 25]].map(([x, y]) => (
        <rect key={`${x}-${y}`} x={x} y={y} width="4" height="4" fill="#555" />
      ))}
      <path d="M20 21v-3a3 3 0 0 1 7 0v3" stroke="#d11" strokeWidth="1.8" />
      <path d="M17 21h13v9H17z" fill="#e07a7a" stroke="#d11" strokeWidth="1.4" />
    </Svg>
  );
}

const rows = [
  { label: "Document Settings", level: 1, width: "w-[277px]", icon: "gear" },
  { label: "Named Views", level: 1, width: "w-[217px]", icon: "folder" },
  { label: "Origin", level: 1, width: "w-[196px]", icon: "folder", eye: "off" },
  { label: "Bodies", level: 1, width: "w-[196px]", icon: "folder", eye: "on", open: true },
  { label: "Body1", level: 2, width: "w-[188px]", icon: "body", eye: "on", leaf: true },
  { label: "Sketches", level: 1, width: "w-[218px]", icon: "folder", eye: "on", open: true },
  { label: "Sketch1", level: 2, width: "w-[211px]", icon: "sketch", eye: "off", leaf: true },
  { label: "Sketch4", level: 2, width: "w-[211px]", icon: "locked", eye: "on", leaf: true },
  { label: "long side:1", level: 1, width: "w-[251px]", icon: "grounded", eye: "on", open: true, bar: "bg-[#ffd479]" },
  { label: "Origin", level: 2, width: "w-[196px]", icon: "folder", eye: "on" },
  { label: "Bodies", level: 2, width: "w-[196px]", icon: "folder", eye: "on" },
  { label: "Sketches", level: 2, width: "w-[219px]", icon: "folder", eye: "off" },
  { label: "long side(Mirror):1", level: 1, width: "w-[327px]", icon: "component", eye: "on", open: true, bar: "bg-[#63dde0]" },
  { label: "Origin", level: 2, width: "w-[196px]", icon: "folder", eye: "off" },
  { label: "short side:1", level: 1, width: "w-[258px]", icon: "component", eye: "on", bar: "bg-[#c4f46d]" },
  { label: "short side(Mirror):1", level: 1, width: "w-[335px]", icon: "component", eye: "on", bar: "bg-[#ff9d68]" },
  { label: "long side(Mirror) (1):1", level: 1, width: "w-[357px]", icon: "component", eye: "on", bar: "bg-[#5b89ee]" },
];

const rowIcons = {
  gear: <Gear className="size-[30px] text-[#888]" />,
  folder: <Folder />,
  body: <Body />,
  sketch: <SketchPencil />,
  locked: <SketchLocked />,
  grounded: <GroundedComponent />,
  component: <Component />,
};

function Twisty({ open }) {
  return (
    <button type="button" aria-label={open ? "Collapse" : "Expand"} className="w-[33px] shrink-0">
      {open ? (
        <Svg box="0 0 14 14" className="size-3.5">
          <path d="M13 1v12H1z" fill="#666" stroke="#111" strokeWidth="1.6" />
        </Svg>
      ) : (
        <Svg box="0 0 12 18" className="w-3 h-[18px]">
          <path d="M1 1h2l8 8-8 8H1z" fill="#fff" stroke="#222" strokeWidth="1.4" />
        </Svg>
      )}
    </button>
  );
}

function TreeRow({ label, level, width, icon, eye, open, leaf, bar }) {
  return (
    <li className={clsx("flex items-center", level === 1 ? "pl-[70px]" : "pl-[104px]")}>
      {leaf ? <span className="w-[33px] shrink-0" /> : <Twisty open={open} />}
      <div className={clsx("flex items-center h-[38px] bg-[#f1f1f1] whitespace-nowrap", width)}>
        {bar && <span className={clsx("w-[9px] h-full shrink-0", bar)} />}
        {eye && (
          <button type="button" aria-label="Toggle visibility" className="ml-1.5 mr-3 w-[35px] shrink-0">
            <Eye off={eye === "off"} />
          </button>
        )}
        <span className={clsx("flex w-[31px] shrink-0", !eye && "ml-1.5")}>{rowIcons[icon]}</span>
        <span className={clsx("pt-px", bar ? "ml-7" : "ml-[27px]")}>{label}</span>
      </div>
    </li>
  );
}

function Round({ plus }) {
  return (
    <Svg box="0 0 18 18" className="size-[18px]">
      <circle cx="9" cy="9" r="9" fill="#2b2b2b" />
      <path d={plus ? "M4 9h10M9 4v10" : "M4 9h10"} stroke="#fff" strokeWidth="2.2" />
    </Svg>
  );
}

function BrowserPanel() {
  return (
    <section className="text-[#333] text-[21px]">
      <div className="flex items-center h-[48px] w-[571px] pl-2 pr-[19px] bg-[#f1f1f1] border border-r-2 border-b-[3px] border-[#ccc] text-[#555]">
        <IconButton label="Collapse browser">
          <Svg box="0 0 20 14" className="w-5 h-3.5">
            <path d="M10 0v14L0 7zM20 0v14l-10-7z" fill="#333" />
          </Svg>
        </IconButton>
        <h2 className="flex-1 ml-[19px]">BROWSER</h2>
        <IconButton label="Minimise browser">
          <Round />
        </IconButton>
      </div>
      <ul className="flex flex-col justify-between h-[816px] mt-[9px]">
        <li className="flex items-center pl-[35px]">
          <Twisty open />
          <div className="flex items-center h-[38px] w-[476px] bg-[#f1f1f1] pl-1">
            <span className="w-1.5 h-[30px] bg-[#ffacb0]" />
            <button type="button" aria-label="Toggle visibility" className="ml-1.5 mr-3 w-[30px]">
              <Eye />
            </button>
            <button type="button" className="flex items-center h-[30px] w-[323px] pl-2 bg-[#979797] text-white text-[22px] font-bold whitespace-nowrap">
              <Svg box="0 0 27 28" className="w-[27px] h-7">
                <path d="M1 4l4-3h9v12h12v10l-4 4H1z" fill="#d5d9e2" stroke="#333" strokeWidth="1.6" />
                <path d="M1 15h12v12M13 13v14" stroke="#8a90a0" strokeWidth="1.2" />
              </Svg>
              <span className="ml-7">W3_pressfit_Jacobs v1</span>
            </button>
            <span className="relative flex items-center justify-center size-[30px] ml-1.5 rounded-full bg-[#d9306c] text-white font-bold">
              M
              <span className="absolute right-0 bottom-0 size-3 rounded-full border-2 border-[#333] bg-white" />
            </span>
            <label className="flex ml-5">
              <input
                type="radio"
                name="active-component"
                aria-label="Active component"
                defaultChecked
                className="appearance-none size-[26px] rounded-full border-2 border-[#666] bg-[radial-gradient(circle,#333_0_5px,#b9c3d2_6px,#eef1f5_11px)]"
              />
            </label>
          </div>
        </li>
        {rows.map((row, i) => (
          <TreeRow key={i} {...row} />
        ))}
      </ul>
    </section>
  );
}

/* ---------- navigation bar ---------- */

const navTools = [
  {
    label: "Orbit",
    caret: "gap-[9px]",
    art: (
      <g stroke="#444" strokeWidth="1.6">
        <path d="M12 30V10H9l6-9 6 9h-3v20z" fill="#dfe2e8" />
        <path d="M19 13c12 1 14 8 2 10-7 1-14 1-18-2-5-4 1-7 8-8" />
        <path d="M8 19l-4 3 5 3" fill="#222" />
      </g>
    ),
  },
  {
    label: "Look at",
    art: (
      <g stroke="#444" strokeWidth="1.6">
        <path d="M3 9l7-5v4l9-6v6l2-5v6" fill="#aaa" />
        <path d="M1.500 11.500h27v17h-27z" fill="#f2f2f2" />
        <path d="M6 15h18v10H6z" fill="#a9afb9" />
      </g>
    ),
  },
  {
    label: "Pan",
    art: (
      <path
        d="M9 28c-1-5-5-8-7-12-1-2 1-3 3-1l4 4L5 6c0-2 2-2 3 0l3 9L11 3c0-2 3-2 3 0l1 11 2-11c0-2 3-2 3 0l-1 12 4-8c1-2 3-1 3 1l-4 12c0 4-1 6-2 8-3 3-9 3-11 0z"
        fill="#f6f6f6"
        stroke="#555"
        strokeWidth="1.5"
      />
    ),
  },
  {
    label: "Zoom",
    art: (
      <g>
        <circle cx="11" cy="11" r="10" fill="#e3efee" stroke="#555" strokeWidth="1.6" />
        <path d="M19 18l9 10" stroke="#333" strokeWidth="4" />
        <path d="M24 4h6M27 1v6M24 11h6" stroke="#333" strokeWidth="1.4" />
      </g>
    ),
  },
  {
    label: "Zoom window",
    caret: "gap-[9px]",
    art: (
      <g>
        <path d="M1 1h28v28H1z" stroke="#777" strokeWidth="1.5" strokeDasharray="5 3" />
        <circle cx="11" cy="11" r="9.5" fill="#e3efee" stroke="#555" strokeWidth="1.6" />
        <path d="M19 18l9 10" stroke="#444" strokeWidth="4" />
      </g>
    ),
  },
  {
    label: "Display settings",
    caret: "gap-[5px]",
    art: (
      <g stroke="#444" strokeWidth="1.6">
        <path d="M1 1h28v22H1z" fill="#e9e9e9" />
        <path d="M4.500 4h21v15h-21z" fill="#92b4de" stroke="#3a5a88" />
        <path d="M12 23h6v4h5v2H7v-2h5z" fill="#ddd" />
      </g>
    ),
  },
  {
    label: "Grid and snaps",
    caret: "gap-[5px]",
    art: (
      <g stroke="#444" strokeWidth="1.3">
        <path d="M1.500 1.500h27v27h-27z" fill="#f2f3f5" />
        <path d="M1 15h28v14H1z" fill="#a4abba" stroke="none" />
        <path d="M6 1v28M10.500 1v28M15 1v28M19.500 1v28M24 1v28M1 6h28M1 10.500h28M1 15h28M1 19.500h28M1 24h28" strokeWidth="0.9" />
      </g>
    ),
  },
  {
    label: "Viewports",
    caret: "gap-[5px]",
    art: (
      <g stroke="#33507c" strokeWidth="1.6">
        <path d="M1.500 3.500h27v24h-27z" fill="#bcd0ea" />
        <path d="M4 6h9v8H4zM17 6h9v8h-9zM4 17h9v8H4zM17 17h9v8h-9z" fill="#92b4de" strokeWidth="1" />
        <path d="M15 3v24M1 15.500h28" />
      </g>
    ),
  },
];

function NavBar() {
  return (
    <div className="flex items-center w-[451px] h-[45px] pl-1.5 pb-1 bg-[#f1f1f1] text-[#333]">
      {navTools.map(({ label, caret, art }) => (
        <button key={label} type="button" aria-label={label} className={clsx("flex items-center", caret ? "mr-[13px]" : "mr-[19px]", caret)}>
          <Svg box="0 0 30 30" className="size-[30px]">{art}</Svg>
          {caret && <Caret />}
        </button>
      ))}
    </div>
  );
}

function Canvas() {
  return (
    <div className="relative flex flex-1 bg-white border-t-4 border-[#f4f4f4] overflow-hidden">
      <Scene />
      <div className="relative flex flex-1 flex-col justify-between pl-[7px] pt-2.5 pb-[7px]">
        <BrowserPanel />
        <div className="flex items-start">
          <div className="flex items-center w-[571px] h-[48px] pl-[46px] pr-[19px] bg-[#f1f1f1] border-b-[3px] border-x-2 border-[#ccc] text-[#555] text-[21px]">
            <h2 className="flex-1">COMMENTS</h2>
            <IconButton label="Add comment">
              <Round plus />
            </IconButton>
          </div>
          <div className="ml-[188px]">
            <NavBar />
          </div>
          <button type="button" aria-label="Assistant" className="flex items-center justify-center size-8 ml-auto mt-3.5 mr-[23px] rounded-full rounded-br-none bg-black">
            <Svg box="0 0 20 20" className="size-5">
              <path d="M2 12L14 4M3 16L17 6M8 17l9-6M14 17l3-2" stroke="#fff" strokeWidth="1.8" />
            </Svg>
          </button>
        </div>
      </div>
    </div>
  );
}

/* ---------- timeline ---------- */

function SparkBody() {
  return (
    <Svg box="0 0 30 30" className="size-[30px]">
      <path d="M2 11l6-7h8v5l6 3h5v10l-7 7H2z" fill="#d6d6d6" stroke="#555" strokeWidth="2" />
      <Spark cx={22} cy={8} r={8} />
    </Svg>
  );
}

function MirrorIcon() {
  return (
    <Svg box="0 0 30 30" className="size-[30px]">
      <path d="M13 4v23H2z" fill="#f3f3f3" stroke="#888" strokeWidth="1.2" />
      <path d="M16 3v25h13z" fill="#5ba6df" />
      <path d="M14.500 1v28" stroke="#888" strokeWidth="1.2" />
    </Svg>
  );
}

function CombineIcon() {
  return (
    <Svg box="0 0 30 30" className="size-[30px]">
      <path d="M1 13l3-3h6V3l3-2h17v18l-3 3h-6v5l-3 3H1z" fill="#5ba6df" stroke="#3d8cc6" />
      <path d="M1 13l3-3h9M10 3h17l3-2" stroke="#86c8fc" strokeWidth="2" />
    </Svg>
  );
}

function MoveIcon() {
  return (
    <Svg box="0 0 30 30" className="size-[30px]">
      <circle cx="21" cy="16" r="8" fill="#a3b9e2" stroke="#333" strokeWidth="1.5" />
      <path d="M14 14v4H8v4l-7-6 7-6v4z" fill="#111" />
    </Svg>
  );
}

const features = [
  "sketch", "extrude", "component",
  "sketch", "sketch", "sketch", "sketch", "sketch", "sketch", "extrude",
  "mirror", "component",
  "sketch", "extrude", "combine",
  "mirror",
  "move",
  "mirror", "sketch",
];
const current = 8;

const featureIcons = {
  sketch: <SketchPencil className="size-[30px]" />,
  extrude: <ExtrudeIcon className="size-[30px]" />,
  component: <SparkBody />,
  mirror: <MirrorIcon />,
  combine: <CombineIcon />,
  move: <MoveIcon />,
};

const spans = [
  ["col-span-3", "bg-[#ffacb0]"],
  ["col-span-7", "bg-[#ffd479]"],
  ["col-span-2", "bg-[#ffacb0]"],
  ["col-span-3", "bg-[#c4f46d]"],
  ["col-span-1", "bg-[#ffacb0]"],
  ["col-span-1", "bg-[#63dde0]"],
  ["col-span-2", "bg-[#ffacb0]"],
];

const playback = [
  ["To start", "M1 2h4v22H1zM21 2v22L6 13z"],
  ["Step back", "M17 2v22L1 13zM19 9h4v8h-4z"],
  ["Play", "M1 0v26l22-13z"],
  ["Step forward", "M7 2v22l16-11zM1 9h4v8H1z"],
  ["To end", "M3 2v22l15-11zM19 2h4v22h-4z"],
];

function Timeline() {
  return (
    <footer className="flex h-[95px] bg-[#f1f1f1] border-t-[5px] border-[#c9c9c9]">
      <div className="flex gap-6 pl-[22px] pt-[34px]">
        {playback.map(([label, d]) => (
          <button key={label} type="button" aria-label={label} className="h-7">
            <Svg box="0 0 24 26" className="w-6 h-7">
              <path d={d} fill="#666" />
            </Svg>
          </button>
        ))}
      </div>
      <div className="relative w-[867px] ml-[34px] pt-3.5">
        <div className="grid grid-cols-[repeat(19,minmax(0,1fr))] h-[11px]">
          {spans.map(([span, color], i) => (
            <span key={i} className={clsx(span, color, "ml-[3px] mr-[5px]")} />
          ))}
        </div>
        <div className="grid grid-cols-[repeat(19,minmax(0,1fr))]">
          {features.map((f, i) => (
            <div key={i} className="flex flex-col items-center">
              <button
                type="button"
                aria-label={`Feature ${i + 1}, ${f}`}
                className={clsx("flex items-center justify-center w-full h-[45px] -mt-1 pr-1 rounded", i === current && "bg-[#d4d4d4]")}
              >
                {featureIcons[f]}
              </button>
              <span className="w-1 h-[9px] bg-[#c9c9c9]" />
            </div>
          ))}
        </div>
        <div className="h-1 mx-[21px] bg-[#c9c9c9]" />
        <Svg box="0 0 24 62" className="absolute -right-3 top-[18px] w-6 h-[62px]">
          <path d="M0 0h24v6l-9 10h-1v46h-4V16H9L0 6z" fill="#666" />
        </Svg>
      </div>
      <IconButton label="Timeline settings" className="ml-auto mr-6 pt-0.5 text-[#808080]">
        <Gear />
      </IconButton>
    </footer>
  );
}

export default function App() {
  return (
    <div className="flex flex-col min-h-screen bg-[#f1f1f1] font-['Noto_Sans','Open_Sans',sans-serif] text-[#333]">
      <AppBar />
      <div className="flex flex-1">
        <DataPanel />
        <main className="flex flex-col flex-1 min-w-0">
          <Ribbon />
          <Canvas />
          <Timeline />
        </main>
      </div>
    </div>
  );
}
